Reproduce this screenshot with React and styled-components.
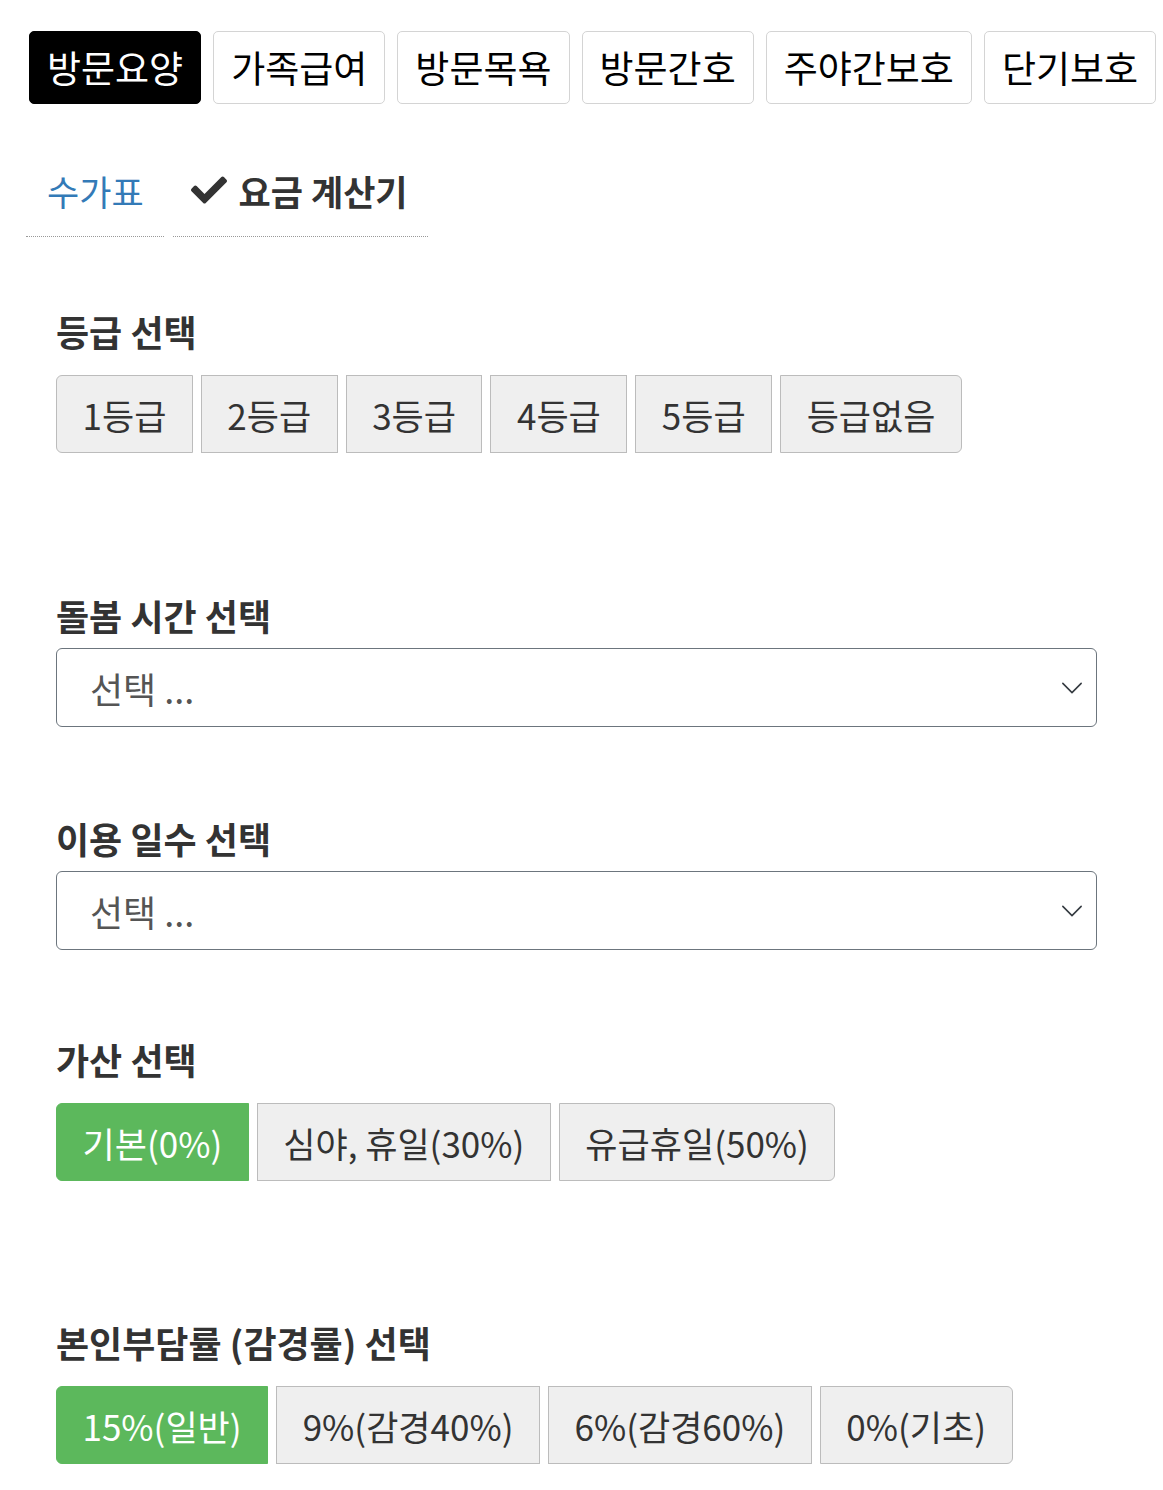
import React, { useState } from 'react';
import styled, { createGlobalStyle } from 'styled-components';
import { FaCheck } from 'react-icons/fa';

const GlobalStyle = createGlobalStyle`
  body {
    margin: 0;
    background: #fff;
    font-family: "Noto Sans CJK KR", "Noto Sans", sans-serif;
    color: #333;
  }
  * { box-sizing: border-box; }
`;

const Page = styled.div`
  padding: 31px 0 20px 26px;
  width: 1163px;
`;

const ServiceTabs = styled.div`
  display: flex;
  gap: 12px;
  margin-left: 3px;
`;

const ServiceTab = styled.button`
  flex-shrink: 0;
  white-space: nowrap;
  height: 73px;
  padding: 0 17px;
  font-family: inherit;
  font-size: 37px;
  line-height: 1;
  border-radius: 5px;
  border: 1px solid ${p => (p.active ? '#000' : '#d4d4d4')};
  background: ${p => (p.active ? '#000' : '#fff')};
  color: ${p => (p.active ? '#fff' : '#000')};
  cursor: pointer;
`;

const SubTabs = styled.div`
  display: flex;
  gap: 9px;
  margin-top: 46px;
`;

const SubTab = styled.div`
  display: flex;
  align-items: center;
  gap: 12px;
  height: 87px;
  padding: ${p => (p.active ? '0 20px 6px 18px' : '0 20px 6px 21px')};
  border-bottom: 1px dotted #999;
  font-size: 35px;
  font-weight: ${p => (p.active ? 700 : 400)};
  color: ${p => (p.active ? '#333' : '#337ab7')};
  white-space: nowrap;
  cursor: pointer;

  svg {
    width: 36px;
    height: 36px;
    color: #333;
  }
`;

const Form = styled.div`
  padding-left: 30px;
  padding-top: 68px;
  width: 1071px;
`;

const Section = styled.section`
  margin-top: ${p => p.gap ?? 85}px;
`;

const Heading = styled.h3`
  margin: 0 0 7px;
  font-size: 36px;
  font-weight: 700;
  line-height: 52px;
  color: #333;
`;

const ButtonGroup = styled.div`
  display: flex;
  gap: 8px;
  margin-top: 18px;
`;

const Choice = styled.button`
  flex-shrink: 0;
  white-space: nowrap;
  height: 78px;
  padding: 0 25.5px;
  font-family: inherit;
  font-size: 35px;
  line-height: 1;
  border: 1px solid ${p => (p.active ? '#5cb85c' : '#bcbcbc')};
  background: ${p => (p.active ? '#5cb85c' : '#efefef')};
  color: ${p => (p.active ? '#fff' : '#333')};
  border-radius: 0;
  cursor: pointer;

  &:first-child {
    border-radius: 6px 0 0 6px;
  }
  &:last-child {
    border-radius: 0 6px 6px 0;
  }
`;

const SelectBox = styled.div`
  display: flex;
  align-items: center;
  justify-content: space-between;
  height: 79px;
  padding: 0 13px 0 33px;
  border: 1px solid #6c757d;
  border-radius: 6px;
  font-size: 36px;
  color: #555;
  cursor: pointer;

  svg {
    width: 22px;
    height: 22px;
  }
`;

const Chevron = () => (
  <svg viewBox="0 0 24 24" fill="none" stroke="#343a40" strokeWidth="1.7" strokeLinecap="round" strokeLinejoin="round">
    <polyline points="2 7 12 17 22 7" />
  </svg>
);

const services = ['방문요양', '가족급여', '방문목욕', '방문간호', '주야간보호', '단기보호'];
const grades = ['1등급', '2등급', '3등급', '4등급', '5등급', '등급없음'];
const extras = ['기본(0%)', '심야, 휴일(30%)', '유급휴일(50%)'];
const rates = ['15%(일반)', '9%(감경40%)', '6%(감경60%)', '0%(기초)'];

export default function App() {
  const [service, setService] = useState(0);
  const [grade, setGrade] = useState(null);
  const [extra, setExtra] = useState(0);
  const [rate, setRate] = useState(0);

  return (
    <>
      <GlobalStyle />
      <Page>
        <ServiceTabs>
          {services.map((s, i) => (
            <ServiceTab key={s} active={i === service} onClick={() => setService(i)}>
              {s}
            </ServiceTab>
          ))}
        </ServiceTabs>

        <SubTabs>
          <SubTab>수가표</SubTab>
          <SubTab active>
            <FaCheck />
            요금 계산기
          </SubTab>
        </SubTabs>

        <Form>
          <Section gap={0}>
            <Heading>등급 선택</Heading>
            <ButtonGroup>
              {grades.map((g, i) => (
                <Choice key={g} active={grade === i} onClick={() => setGrade(i)}>
                  {g}
                </Choice>
              ))}
            </ButtonGroup>
          </Section>

          <Section gap={136}>
            <Heading>돌봄 시간 선택</Heading>
            <SelectBox>
              선택 ...
              <Chevron />
            </SelectBox>
          </Section>

          <Section>
            <Heading>이용 일수 선택</Heading>
            <SelectBox>
              선택 ...
              <Chevron />
            </SelectBox>
          </Section>

          <Section gap={83}>
            <Heading>가산 선택</Heading>
            <ButtonGroup>
              {extras.map((e, i) => (
                <Choice key={e} active={extra === i} onClick={() => setExtra(i)}>
                  {e}
                </Choice>
              ))}
            </ButtonGroup>
          </Section>

          <Section gap={135}>
            <Heading>본인부담률 (감경률) 선택</Heading>
            <ButtonGroup>
              {rates.map((r, i) => (
                <Choice key={r} active={rate === i} onClick={() => setRate(i)}>
                  {r}
                </Choice>
              ))}
            </ButtonGroup>
          </Section>
        </Form>
      </Page>
    </>
  );
}
